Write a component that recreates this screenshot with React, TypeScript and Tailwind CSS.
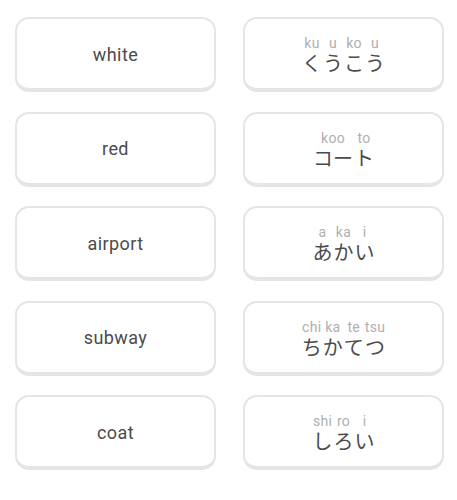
import React from "react";

type Seg = [string, string];

const left = ["white", "red", "airport", "subway", "coat"];
const right: Seg[][] = [
  [["ku", "く"], ["u", "う"], ["ko", "こ"], ["u", "う"]],
  [["koo", "コー"], ["to", "ト"]],
  [["a", "あ"], ["ka", "か"], ["i", "い"]],
  [["chi", "ち"], ["ka", "か"], ["te", "て"], ["tsu", "つ"]],
  [["shi", "し"], ["ro", "ろ"], ["i", "い"]],
];

const card =
  "h-[75px] rounded-[14px] border-2 border-b-4 border-[#e5e5e5] bg-white flex flex-col items-center justify-center";

export default function App() {
  return (
    <div
      className="w-[457px] h-[500px] bg-white pl-[15px] pr-[13px] pt-[17px] grid grid-cols-[201px_201px] gap-x-[27px] gap-y-[19.5px] content-start"
      style={{ fontFamily: "Roboto, 'Noto Sans CJK JP', sans-serif" }}
    >
      {left.map((w, i) => (
        <React.Fragment key={w}>
          <div className={card}>
            <span className="text-[18px] leading-[22px] text-[#4b4b4b] tracking-[0.4px] mt-[2px]">{w}</span>
          </div>
          <div className={card}>
            <div className="flex items-end mt-[3px]">
              {right[i].map(([r, k], j) => (
                <div key={j} className="flex flex-col items-center gap-[2px] px-[0.5px]">
                  <span className="text-[14px] leading-[14px] text-[#afafaf] tracking-[0.3px]">{r}</span>
                  <span
                    className="text-[20px] leading-[22px] text-[#4b4b4b]"
                    style={{ fontFamily: "'Noto Sans CJK JP', sans-serif" }}
                  >
                    {k}
                  </span>
                </div>
              ))}
            </div>
          </div>
        </React.Fragment>
      ))}
    </div>
  );
}
